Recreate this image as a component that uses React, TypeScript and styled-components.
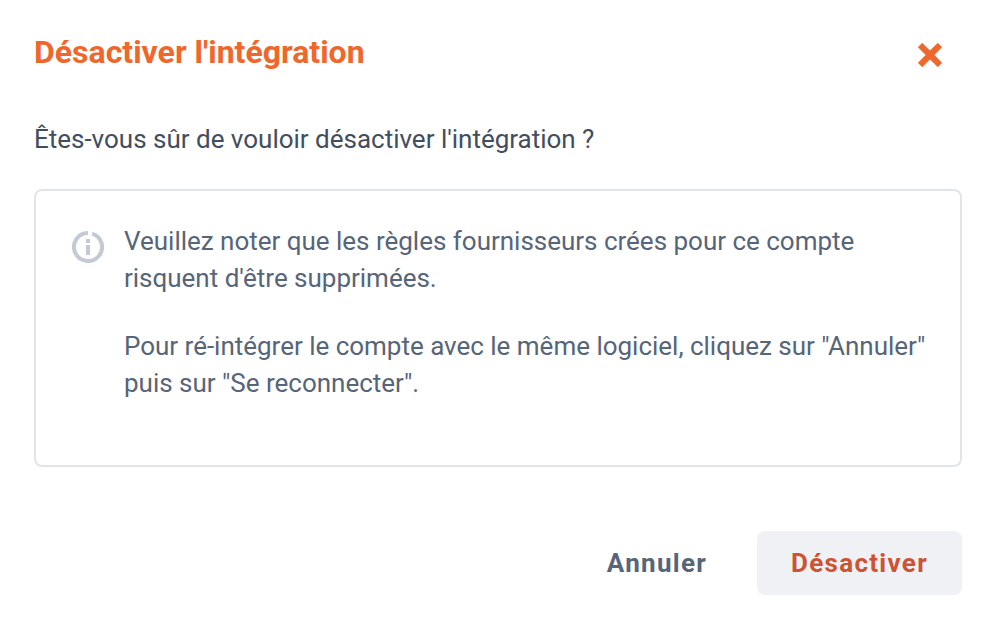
import React from "react";
import styled, { createGlobalStyle } from "styled-components";

const GlobalStyle = createGlobalStyle`
  *, *::before, *::after { box-sizing: border-box; }
  body { margin: 0; background: #fff; }
`;

const Dialog = styled.section`
  width: 994px;
  height: 640px;
  padding: 31px 32px 45px 34px;
  display: flex;
  flex-direction: column;
  background: #fff;
  color: #414e5f;
  font-family: Roboto, sans-serif;
  font-size: 26px;
`;

const Header = styled.header`
  height: 46px;
  display: flex;
  justify-content: space-between;
  align-items: flex-start;
`;

const Title = styled.h1`
  margin: 0;
  font-size: 32px;
  line-height: 42px;
  font-weight: 700;
  color: #ef672c;
`;

const CloseButton = styled.button`
  margin: 12px 20px 0 0;
  padding: 0;
  width: 24px;
  height: 24px;
  border: 0;
  background: none;
  color: #ef672c;
  svg { display: block; }
`;

const Question = styled.p`
  margin: 44px 0 0;
  line-height: 36px;
  letter-spacing: -0.01px;
`;

const Notice = styled.div`
  margin-top: 32px;
  height: 278px;
  padding: 32px 30px 0 36px;
  display: flex;
  gap: 20px;
  border: 2px solid #e1e4e8;
  border-radius: 8px;
  color: #566579;
`;

const InfoIcon = styled.svg`
  flex: none;
  margin-top: 8px;
`;

const NoticeText = styled.div`
  white-space: nowrap;
  letter-spacing: -0.014px;
`;

const Paragraph = styled.p`
  margin: 0 0 31px;
  line-height: 37px;
`;

const Actions = styled.footer`
  margin-top: 64px;
  display: flex;
  justify-content: flex-end;
  gap: 16px;
`;

const Button = styled.button<{ $danger?: boolean }>`
  height: 64px;
  width: ${(p) => (p.$danger ? 205 : 168)}px;
  padding: 0;
  border: 0;
  border-radius: 8px;
  background: ${(p) => (p.$danger ? "#f0f1f5" : "transparent")};
  color: ${(p) => (p.$danger ? "#cd5333" : "#566579")};
  font: 700 26px/64px Roboto, sans-serif;
  letter-spacing: 1.3px;
`;

export default function App() {
  return (
    <>
      <GlobalStyle />
      <Dialog>
        <Header>
          <Title>Désactiver l'intégration</Title>
          <CloseButton aria-label="Fermer">
            <svg width="24" height="24" viewBox="0 0 24 24" fill="currentColor" stroke="currentColor" strokeLinejoin="round">
              <path
                d="M4.2 .7L12 8.5L19.8 .7L23.3 4.2L15.5 12L23.3 19.8L19.8 23.3L12 15.5L4.2 23.3L.7 19.8L8.5 12L.7 4.2Z"
                strokeWidth="1.2"
              />
            </svg>
          </CloseButton>
        </Header>
        <Question>Êtes-vous sûr de vouloir désactiver l'intégration ?</Question>
        <Notice>
          <InfoIcon width="32" height="32" viewBox="0 0 32 32" fill="none" stroke="#c3cad4">
            <path d="M20.1 2.6A14 14 0 1 1 16 2" strokeWidth="4" />
            <path d="M16 8v4M16 14v10" strokeWidth="4" />
          </InfoIcon>
          <NoticeText>
            <Paragraph>
              Veuillez noter que les règles fournisseurs crées pour ce compte
              <br />
              risquent d'être supprimées.
            </Paragraph>
            <Paragraph>
              Pour ré-intégrer le compte avec le même logiciel, cliquez sur "Annuler"
              <br />
              puis sur "Se reconnecter".
            </Paragraph>
          </NoticeText>
        </Notice>
        <Actions>
          <Button>Annuler</Button>
          <Button $danger>Désactiver</Button>
        </Actions>
      </Dialog>
    </>
  );
}
